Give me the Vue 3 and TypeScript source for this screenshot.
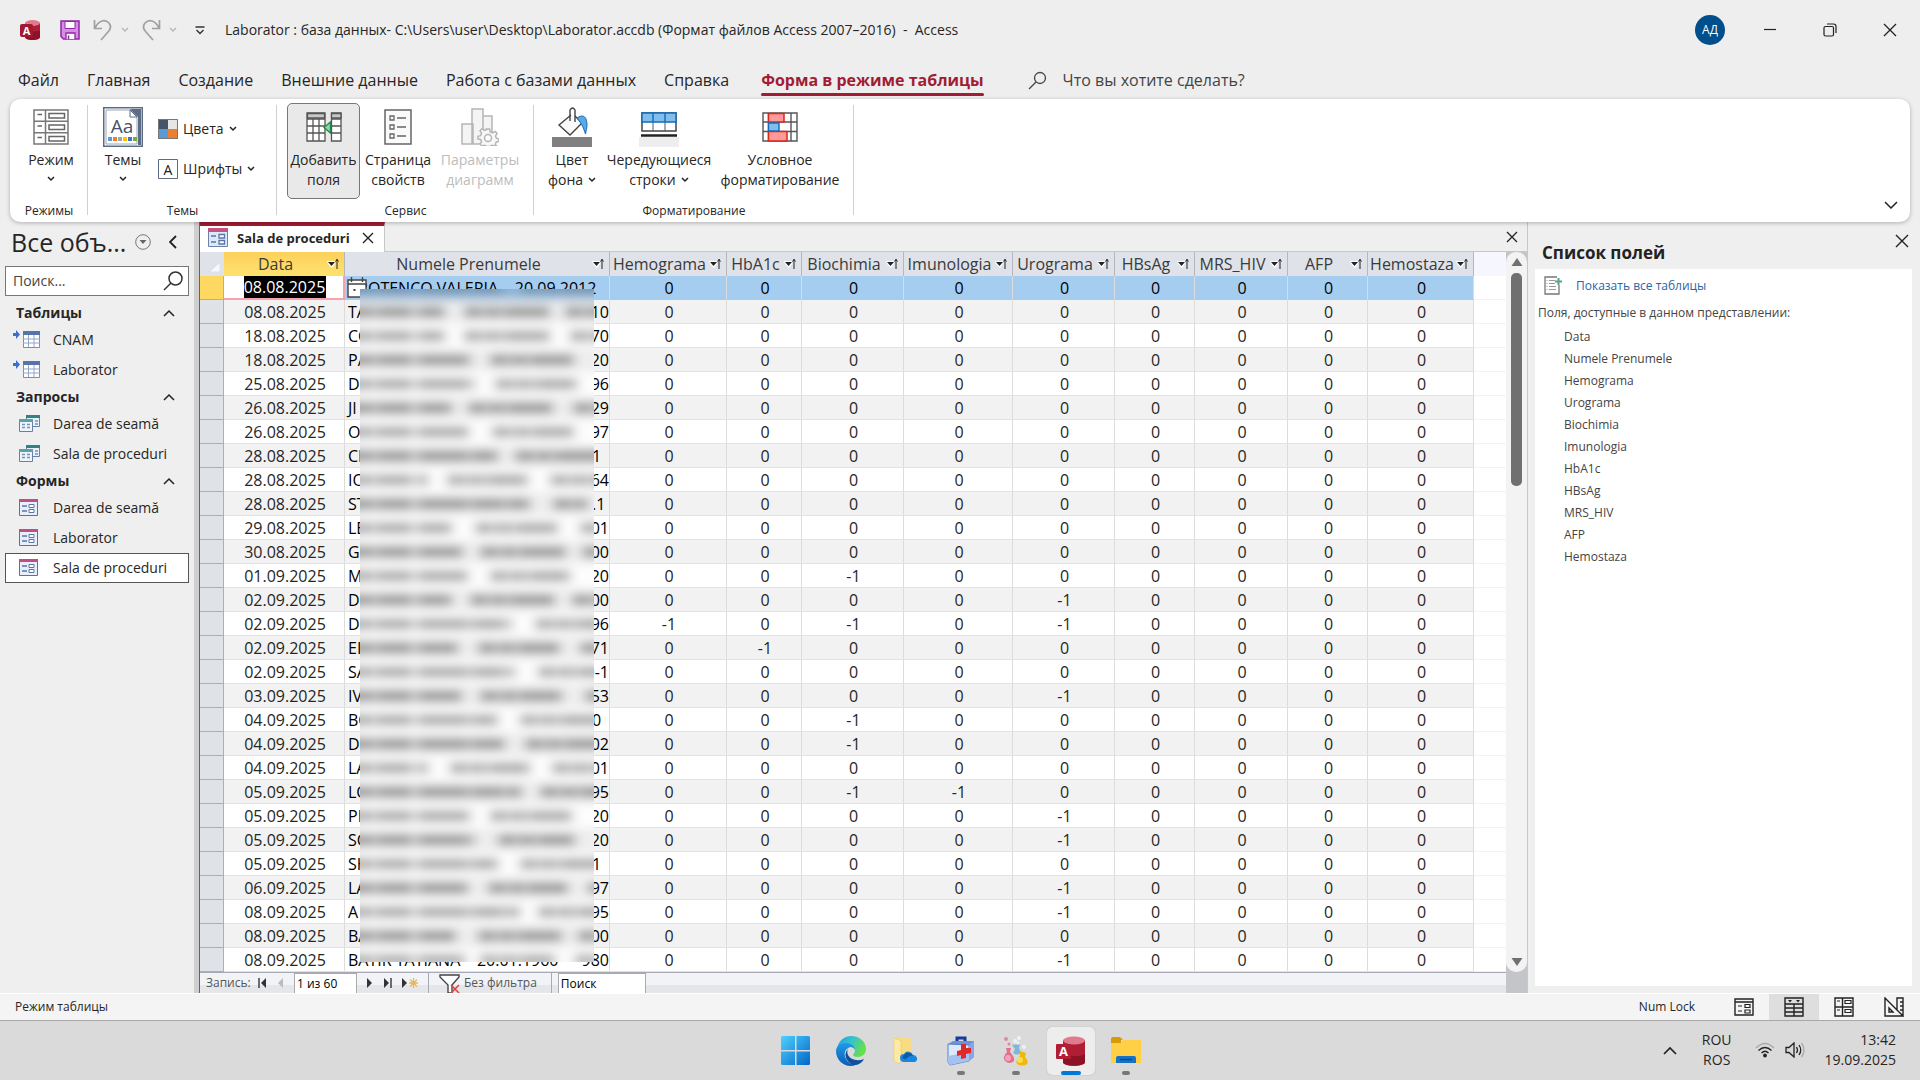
<script setup lang="ts">
import { ref } from 'vue'

interface NavGroup { title: string; kind: 'table' | 'query' | 'form'; items: string[] }
interface Column { name: string; width: number }
interface Row { date: string; name: string; tail: string; marks: number[]; veil: number[][] }

const menuTabs = ['Файл', 'Главная', 'Создание', 'Внешние данные', 'Работа с базами данных', 'Справка']

const navGroups: NavGroup[] = [
  { title: 'Таблицы', kind: 'table', items: ['CNAM', 'Laborator'] },
  { title: 'Запросы', kind: 'query', items: ['Darea de seamă', 'Sala de proceduri'] },
  { title: 'Формы', kind: 'form', items: ['Darea de seamă', 'Laborator', 'Sala de proceduri'] },
]
const isSelected = (g: NavGroup, item: string) => g.kind === 'form' && item === 'Sala de proceduri'

const columns: Column[] = [
  { name: 'Data', width: 121 },
  { name: 'Numele Prenumele', width: 265 },
  { name: 'Hemograma', width: 117 },
  { name: 'HbA1c', width: 75 },
  { name: 'Biochimia', width: 102 },
  { name: 'Imunologia', width: 109 },
  { name: 'Urograma', width: 102 },
  { name: 'HBsAg', width: 80 },
  { name: 'MRS_HIV', width: 93 },
  { name: 'AFP', width: 80 },
  { name: 'Hemostaza', width: 106 },
]
const tests = columns.slice(2)

// marks: indexes of the analyses that were ordered; veil: start/end of each obscured word
const row = (date: string, name: string, tail: string, marks: number[], veil: number[][]): Row =>
  ({ date, name, tail, marks, veil })

const rows: Row[] = [
  row('08.08.2025', 'CROTENCO VALERIA    20.09.2012', '', [], [[-20, 142], [162, 260]]),
  row('08.08.2025', 'TA', '10', [], [[-20, 85], [104, 190], [205, 260]]),
  row('18.08.2025', 'CO', '70', [], [[-20, 85], [104, 190], [210, 260]]),
  row('18.08.2025', 'PA', '20', [], [[-20, 112], [130, 214]]),
  row('25.08.2025', 'D', '96', [], [[-20, 115], [135, 217]]),
  row('26.08.2025', 'JI', '29', [], [[-20, 92], [108, 193], [213, 260]]),
  row('26.08.2025', 'O', '97', [], [[-20, 110], [132, 214]]),
  row('28.08.2025', 'CI', '1', [], [[-20, 138], [155, 260]]),
  row('28.08.2025', 'IO', '64', [], [[-20, 68], [87, 168], [190, 260]]),
  row('28.08.2025', 'ST', '.1', [], [[-20, 170], [193, 228]]),
  row('29.08.2025', 'LE', '01', [], [[-20, 92], [115, 198], [220, 260]]),
  row('30.08.2025', 'G', '00', [], [[-20, 103], [120, 206], [222, 260]]),
  row('01.09.2025', 'M', '20', [2], [[-20, 108], [130, 210]]),
  row('02.09.2025', 'D', '00', [4], [[-20, 92], [110, 195], [212, 260]]),
  row('02.09.2025', 'D', '96', [0, 2, 4], [[-20, 152], [175, 260]]),
  row('02.09.2025', 'EI', '71', [1], [[-20, 98], [118, 200], [220, 260]]),
  row('02.09.2025', 'SA', '0-1', [], [[-20, 155], [178, 260]]),
  row('03.09.2025', 'IV', '53', [4], [[-20, 102], [120, 202], [225, 260]]),
  row('04.09.2025', 'BO', '0', [2], [[-20, 138], [160, 260]]),
  row('04.09.2025', 'D', '02', [2], [[-20, 146], [165, 260]]),
  row('04.09.2025', 'LA', '01', [], [[-20, 68], [90, 170], [192, 260]]),
  row('05.09.2025', 'LO', '95', [2, 3], [[-20, 162], [180, 260]]),
  row('05.09.2025', 'PE', '20', [4], [[-20, 112], [130, 212]]),
  row('05.09.2025', 'SO', '20', [4], [[-20, 115], [138, 215]]),
  row('05.09.2025', 'SH', '1', [], [[-20, 138], [160, 260]]),
  row('06.09.2025', 'LA', '97', [4], [[-20, 108], [128, 208], [228, 260]]),
  row('08.09.2025', 'A', '95', [4], [[-20, 160], [178, 260]]),
  row('08.09.2025', 'BA', '00', [], [[-20, 96], [118, 202], [218, 260]]),
  row('08.09.2025', 'BATÎR TATIANA    20.01.1960', '980', [4], [[-20, 105], [120, 195], [215, 260]]),
]

const fields = ['Data', 'Numele Prenumele', 'Hemograma', 'Urograma', 'Biochimia', 'Imunologia', 'HbA1c', 'HBsAg', 'MRS_HIV', 'AFP', 'Hemostaza']

const tellMe = ref('')
const navSearch = ref('')
const currentDate = ref('08.08.2025')
const position = ref('1 из 60')
const recordSearch = ref('')
</script>

<template>
  <div class="desktop">
    <header class="titlebar">
      <div class="quick">
        <svg width="20" height="20" viewBox="0 0 20 20" aria-hidden="true">
          <path d="M5 3v14c0 4 15 4 15 0V3z" fill="#b01e35" /><path d="M5 12v5c0 4 15 4 15 0v-6z" fill="#8c1225" />
          <ellipse cx="12.500" cy="3" rx="7.500" ry="3" fill="#e07a8d" />
          <rect y="4" width="13" height="13" rx="2" fill="#a31730" />
          <text x="6.500" y="14.500" text-anchor="middle" font-size="11" font-weight="700" fill="#fff">A</text>
        </svg>
        <button class="ghost save" aria-label="Сохранить">
          <svg width="20" height="20" viewBox="0 0 20 20"><path d="M1 1h18v18H3.500L1 16.500z" fill="#d48fe0" stroke="#9325a8" stroke-width="1.500" /><path d="M5 1.500h10v7H5z" fill="#fff" stroke="#9325a8" /><path d="M6 19v-6h9v6" fill="#fff" stroke="#9325a8" stroke-width="1.300" /><path d="M8.500 15.500V19" stroke="#9325a8" stroke-width="1.500" /></svg>
        </button>
        <button class="ghost undo" aria-label="Отменить">
          <svg width="20" height="22" viewBox="0 0 20 22" fill="none" stroke="#a0a0a0" stroke-width="1.700"><path d="M1.500 1v8.500H9M2 9C6 1 12 0 16 4c3 4 1 7-1 9l-7 8" /></svg>
          <svg width="8" height="6" viewBox="0 0 8 6" fill="none" stroke="#b5b5b5" stroke-width="1.300"><path d="M1 1l3 3 3-3" /></svg>
        </button>
        <button class="ghost undo" aria-label="Вернуть">
          <svg width="20" height="22" viewBox="0 0 20 22" fill="none" stroke="#a0a0a0" stroke-width="1.700"><path d="M18.500 1v8.500H11M18 9C14 1 8 0 4 4c-3 4-1 7 1 9l7 8" /></svg>
          <svg width="8" height="6" viewBox="0 0 8 6" fill="none" stroke="#b5b5b5" stroke-width="1.300"><path d="M1 1l3 3 3-3" /></svg>
        </button>
        <button class="ghost more" aria-label="Настройка панели">
          <svg width="10" height="9" viewBox="0 0 10 9" fill="none" stroke="#333" stroke-width="1.400"><path d="M.5 1h9M1.500 4l3.500 3.500L8.500 4" /></svg>
        </button>
      </div>
      <h1>Laborator : база данных- C:\Users\user\Desktop\Laborator.accdb (Формат файлов Access 2007–2016) &nbsp;- &nbsp;Access</h1>
      <button class="avatar">АД</button>
      <div class="winctl">
        <button class="ghost" aria-label="Свернуть"><svg width="14" height="14" viewBox="0 0 14 14"><path d="M1 6.500h12" stroke="#222" stroke-width="1.200" /></svg></button>
        <button class="ghost" aria-label="Восстановить"><svg width="14" height="14" viewBox="0 0 14 14" fill="none" stroke="#222" stroke-width="1.200"><rect x="1" y="3.500" width="9.500" height="9.500" rx="1.500" /><path d="M4 1h6.500Q13 1 13 3.500V10" /></svg></button>
        <button class="ghost" aria-label="Закрыть"><svg width="14" height="14" viewBox="0 0 14 14"><path d="M1 1l12 12M13 1L1 13" stroke="#222" stroke-width="1.300" /></svg></button>
      </div>
    </header>

    <nav class="menu">
      <button v-for="t in menuTabs" :key="t">{{ t }}</button>
      <button class="active">Форма в режиме таблицы</button>
      <label class="tellme">
        <svg width="19" height="19" viewBox="0 0 19 19" fill="none" stroke="#444" stroke-width="1.300"><circle cx="12" cy="7" r="5.500" /><path d="M8 11l-7 7" /></svg>
        <input v-model="tellMe" placeholder="Что вы хотите сделать?" aria-label="Что вы хотите сделать?">
      </label>
    </nav>

    <section class="ribbon">
      <div class="group modes">
        <div class="tools">
          <button class="big">
            <span class="pic"><svg width="36" height="36" viewBox="0 0 36 36" fill="none" stroke="#555" stroke-width="1.500"><path d="M1 1h34v34H1zM1 12.300h34M1 23.700h34M12.500 1v34" stroke="#777" /><path d="M16 4.500h15.500v4.500H16zM16 16h15.500v4.500H16zM16 27.500h15.500v4.500H16zM4.500 5.500H9M4.500 17H9M4.500 28.500H9" stroke="#666" /></svg></span>
            <span>Режим</span><svg class="drop" width="8" height="6" viewBox="0 0 8 6"><path d="M1 1l3 3 3-3" /></svg>
          </button>
        </div>
        <div class="caption">Режимы</div>
      </div>
      <div class="group themes">
        <div class="tools">
          <button class="big">
            <span class="pic"><svg width="40" height="40" viewBox="0 0 40 40"><rect width="40" height="40" fill="#5d6c85" /><rect x="1.500" y="1.500" width="37" height="37" fill="#fff" /><path d="M3 3h25l6 6v28H3z" fill="#fff" stroke="#9aa5b5" /><path d="M27 2h11v36h-3V10z" fill="#5d6c85" /><path d="M27 3v7h7z" fill="#fff" stroke="#5d6c85" /><text x="19" y="26" text-anchor="middle" font-size="19" fill="#44546a">Aa</text><path d="M5 30h4v4H5z" fill="#5b9bd5" /><path d="M10 30h4v4h-4z" fill="#ed7d31" /><path d="M15 30h4v4h-4z" fill="#a5a5a5" /><path d="M20 30h4v4h-4z" fill="#ffc000" /><path d="M25 30h4v4h-4z" fill="#4472c4" /><path d="M30 30h4v4h-4z" fill="#70ad47" /></svg></span>
            <span>Темы</span><svg class="drop" width="8" height="6" viewBox="0 0 8 6"><path d="M1 1l3 3 3-3" /></svg>
          </button>
          <div class="smalls">
            <button class="small"><svg width="20" height="20" viewBox="0 0 20 20"><path d="M0 0h10v10H0z" fill="#44546a" /><path d="M10 0h10v10H10z" fill="#e7e6e6" /><path d="M0 10h10v10H0z" fill="#5b9bd5" /><path d="M10 10h10v10H10z" fill="#ed7d31" /><path d="M.5.500h19v19H.5z" fill="none" stroke="#777" /></svg>Цвета<svg class="drop" width="8" height="6" viewBox="0 0 8 6"><path d="M1 1l3 3 3-3" /></svg></button>
            <button class="small"><svg width="20" height="20" viewBox="0 0 20 20"><path d="M.5.500h19v19H.5z" fill="#fff" stroke="#5d6c85" /><text x="10" y="15.500" text-anchor="middle" font-size="14" fill="#222">A</text></svg>Шрифты<svg class="drop" width="8" height="6" viewBox="0 0 8 6"><path d="M1 1l3 3 3-3" /></svg></button>
          </div>
        </div>
        <div class="caption">Темы</div>
      </div>
      <div class="group service">
        <div class="tools">
          <button class="big pressed">
            <span class="pic"><svg width="36" height="30" viewBox="0 0 36 30" fill="#fff" stroke="#555" stroke-width="1.300"><path d="M1 1h18v28H1zM1 7h18M1 14h18M1 21h18M7 7v22M13 7v22" /><path d="M1.500 1.500h17v4.500h-17z" fill="#c8c8c8" /><path d="M25.500 1H35v28h-9.500zM25.500 7H35M25.500 14H35M25.500 21H35" /><path d="M25.500 1.500H35v4.500h-9.500z" fill="#c8c8c8" /><path d="M24.500 10v11L18 15.500z" fill="#8fd6a3" stroke="#1f8a4c" /></svg></span>
            <span>Добавить</span><span>поля</span>
          </button>
          <button class="big page">
            <span class="pic"><svg width="28" height="36" viewBox="0 0 28 36" fill="none" stroke="#666" stroke-width="1.500"><path d="M1 1h26v34H1z" fill="#fafafa" /><path d="M6 7h4v4H6zM6 16h4v4H6zM6 25h4v4H6zM13 9h9M13 18h9M13 27h9" stroke-width="1.300" /></svg></span>
            <span>Страница</span><span>свойств</span>
          </button>
          <button class="big chart" disabled>
            <span class="pic"><svg width="38" height="38" viewBox="0 0 38 38" fill="#f4f4f4" stroke="#b5b5b5" stroke-width="1.500"><path d="M22 8h9v28h-9zM1 16h11v20H1zM11 1h11v35H11z" /><path d="M25.600 21h3l.6 3 2.300 1 2.600-1.600 2 2-1.600 2.600 1 2.300 2.500.6v2.500l-2.700.6-1 2.300 1.200 1.700-2 0-2.400-.6-2.300 1h-3l-2.400-1-2.400.6-2-2 1.600-2.400-1-2.200-2.700-.6v-2.500l2.700-.6 1-2.300-1.600-2.600 2-2 2.600 1.600 2.300-1z" fill="#f8f8f8" /><circle cx="27" cy="30" r="3.500" fill="#fff" /></svg></span>
            <span>Параметры</span><span>диаграмм</span>
          </button>
        </div>
        <div class="caption">Сервис</div>
      </div>
      <div class="group format">
        <div class="tools">
          <button class="big fill">
            <span class="pic"><svg width="40" height="40" viewBox="0 0 40 40" fill="none"><path d="M0 30h40v10H0z" fill="#808080" /><path d="M19 8L7 18l11 10 12-12-7-7" fill="#fafafa" stroke="#444" stroke-width="1.400" /><path d="M18 14V3q2.500-4 5 0v12" stroke="#444" stroke-width="1.400" /><path d="M25 11c7-5 10 0 10 7-.5 5-1 6-1.500 9-2-6-3-9-8.500-16z" fill="#5aa9e6" stroke="#0f6cbd" /></svg></span>
            <span>Цвет</span><span>фона <svg class="drop" width="8" height="6" viewBox="0 0 8 6"><path d="M1 1l3 3 3-3" /></svg></span>
          </button>
          <button class="big rows">
            <span class="pic"><svg width="40" height="40" viewBox="0 0 40 40" fill="none"><path d="M0 30h40v10H0z" fill="#eee" /><path d="M3 6h34v18H3z" fill="#fff" stroke="#444" stroke-width="1.500" /><path d="M14 15v9M26 15v9" stroke="#555" /><path d="M3 6h34v9H3z" fill="#83bdec" /><path d="M3 6h34v9H3zM14 6v9M26 6v9" stroke="#0f6cbd" stroke-width="1.400" /><path d="M2 28.500h36" stroke="#222" stroke-width="2.500" /></svg></span>
            <span>Чередующиеся</span><span>строки <svg class="drop" width="8" height="6" viewBox="0 0 8 6"><path d="M1 1l3 3 3-3" /></svg></span>
          </button>
          <button class="big cond">
            <span class="pic"><svg width="36" height="30" viewBox="0 0 36 30" fill="#fff" stroke="#555" stroke-width="1.400"><path d="M1 1h34v28H1zM1 10h34M1 19.500h34M29 1v28M6.500 1v28" /><path d="M6.500 1.500H22V10H6.500zM6.500 19.500H25V29H6.500z" fill="#ff9a9a" stroke="#d9281c" stroke-width="1.500" /><path d="M6.500 11H17v8H6.500z" fill="#83bdec" stroke="#0f6cbd" /></svg></span>
            <span>Условное</span><span>форматирование</span>
          </button>
        </div>
        <div class="caption">Форматирование</div>
      </div>
      <button class="ghost collapse" aria-label="Свернуть ленту"><svg width="14" height="8" viewBox="0 0 14 8"><path d="M1 1l6 6 6-6" fill="none" stroke="#222" stroke-width="1.500" /></svg></button>
    </section>

    <main class="work">
      <aside class="objects">
        <div class="objhead">
          <h2>Все объ...</h2>
          <button class="ghost" aria-label="Фильтр объектов"><svg width="16" height="16" viewBox="0 0 16 16"><circle cx="8" cy="8" r="7.300" fill="none" stroke="#777" /><path d="M4.500 6h7L8 10z" fill="#666" /></svg></button>
          <button class="ghost fold" aria-label="Свернуть область"><svg width="8" height="14" viewBox="0 0 8 14"><path d="M7 1L1 7l6 6" fill="none" stroke="#222" stroke-width="1.800" /></svg></button>
        </div>
        <label class="objsearch">
          <input v-model="navSearch" placeholder="Поиск..." aria-label="Поиск объектов">
          <svg width="20" height="20" viewBox="0 0 20 20" fill="none" stroke="#333" stroke-width="1.500"><circle cx="12.500" cy="7.500" r="6.500" /><path d="M8 12l-7 7" /></svg>
        </label>
        <section v-for="g in navGroups" :key="g.title">
          <button class="objgroup">{{ g.title }}<svg width="12" height="8" viewBox="0 0 12 8"><path d="M1 7l5-5 5 5" fill="none" stroke="#222" stroke-width="1.500" /></svg></button>
          <button v-for="item in g.items" :key="item" class="objitem" :class="{ chosen: isSelected(g, item) }">
            <svg v-if="g.kind === 'table'" width="28" height="20" viewBox="0 0 28 20"><path d="M0 3h3V0l4 4.500L3 9V6H0z" fill="#3a6fd0" /><path d="M10.500 1.500h16v16h-16z" fill="#fff" stroke="#7a8eb5" /><path d="M10 1h17v4H10z" fill="#5673ac" /><path d="M10 9h17M10 13h17M15.500 5v12M21 5v12" stroke="#93a6ca" /></svg>
            <svg v-else-if="g.kind === 'query'" width="28" height="20" viewBox="0 0 28 20"><path d="M13.500 1.500h13v11h-13z" fill="#eaf1fa" stroke="#6a80a5" /><path d="M13 1h14v3H13z" fill="#2f8286" /><path d="M6.500 6.500h13v11h-13z" fill="#eef4fc" stroke="#6a80a5" /><path d="M6 5h14v3H6z" fill="#5aa3a5" /><path d="M9 10.500h3M14 10.500h3M9 13.500h3M14 13.500h3M22 7h3M22 10h3" stroke="#7b92b8" stroke-width="1.500" /></svg>
            <svg v-else width="28" height="20" viewBox="0 0 28 20"><path d="M6.500 1.500h18v16h-18z" fill="#e8eefb" stroke="#58739f" /><path d="M6 1h19v3H6z" fill="#bf4f7c" /><path d="M9 8h5M9 13h5" stroke="#5b76a6" stroke-width="1.500" /><path d="M16 6.500h5v3h-5zM16 11.500h5v3h-5z" fill="#fff" stroke="#5b76a6" /></svg>
            {{ item }}
          </button>
        </section>
      </aside>
      <div class="splitter"></div>

      <section class="document">
        <div class="doctabs">
          <div class="doctab">
            <svg width="20" height="20" viewBox="0 0 20 20"><path d="M.5.500h19v18H.5z" fill="#dfe8f8" stroke="#6d82ab" /><path d="M0 0h20v4H0z" fill="#c5527f" /><path d="M3 8h5M3 14h5" stroke="#5b76a6" stroke-width="1.600" /><path d="M11 6.500h5.500v3.500H11zM11 12.500h5.500v3.500H11z" fill="#fff" stroke="#5b76a6" stroke-width="1.300" /></svg>
            <strong>Sala de proceduri</strong>
            <button class="ghost" aria-label="Закрыть вкладку"><svg width="12" height="12" viewBox="0 0 12 12"><path d="M1 1l10 10M11 1L1 11" stroke="#222" stroke-width="1.400" /></svg></button>
          </div>
          <button class="ghost closeall" aria-label="Закрыть объект"><svg width="12" height="12" viewBox="0 0 12 12"><path d="M1 1l10 10M11 1L1 11" stroke="#222" stroke-width="1.300" /></svg></button>
        </div>
        <div class="sheet">
          <div class="left">
            <div class="gridwrap">
              <table>
                <colgroup><col style="width: 24px"><col v-for="c in columns" :key="c.name" :style="{ width: c.width + 'px' }"><col></colgroup>
                <thead>
                  <tr>
                    <th class="corner"><svg width="11" height="10" viewBox="0 0 11 10"><path d="M11 0v10H0z" fill="#f6f8fb" stroke="#c2c8d0" stroke-width=".5" /></svg></th>
                    <th v-for="c in columns" :key="c.name" :class="{ sorted: c.name === 'Data' }">
                      <button><span>{{ c.name }}</span><svg width="12" height="12" viewBox="0 0 12 12"><path d="M0 3h8v3L5 10 1 6z" fill="#fff" /><path d="M1 4h7L4.500 8z" fill="#222" /><path d="M10 1v10M8.500 3.500L10 1.500l1.500 2" stroke="#222" fill="none" /></svg></button>
                    </th>
                    <th class="rest"></th>
                  </tr>
                </thead>
                <tbody>
                  <tr v-for="(r, i) in rows" :key="i" :class="{ current: i === 0 }">
                    <th scope="row" class="selector"></th>
                    <td v-if="i === 0" class="editing"><input v-model="currentDate" aria-label="Data"></td>
                    <td v-else>{{ r.date }}</td>
                    <td class="person"><div><span>{{ r.name }}</span><span v-if="r.tail" class="tail">{{ r.tail }}</span></div></td>
                    <td v-for="(t, k) in tests" :key="t.name">{{ r.marks.includes(k) ? '-1' : '0' }}</td>
                    <td class="rest"></td>
                  </tr>
                </tbody>
              </table>
              <button class="calendar" aria-label="Выбрать дату"><svg width="20" height="21" viewBox="0 0 20 21" fill="#fff" stroke="#444" stroke-width="1.400"><path d="M1 3h18v17H1z" /><path d="M1 7h18M4.500 0v5M15.500 0v5" /><path d="M6.500 12h2v2h-2z" fill="#444" stroke="none" /></svg></button>
              <svg class="veil" width="234" height="673" viewBox="0 37 234 673" aria-hidden="true">
                <defs><filter id="soft" x="-10%" y="-5%" width="120%" height="110%"><feGaussianBlur stdDeviation="6 5" /></filter></defs>
                <rect y="37" width="234" height="673" fill="#f6f6f6" />
                <g filter="url(#soft)">
                  <template v-for="(r, i) in rows" :key="i">
                    <rect x="-30" :y="24 + i * 24" width="294" height="24" :fill="i === 0 ? '#8fb6d8' : i % 2 ? '#eeeeee' : '#fdfdfd'" />
                    <line v-for="(s, k) in r.veil" :key="k" :x1="s[0]" :x2="s[1]" :y1="36 + i * 24" :y2="36 + i * 24" :stroke="i === 0 ? '#7796b4' : i % 2 ? '#9f9f9f' : '#b0b0b0'" stroke-width="12" :stroke-dasharray="k === 0 ? '34 2 37 4 52 2' : '19 2 16 2 60 3'" />
                  </template>
                </g>
              </svg>
            </div>
            <div class="records">
              <span class="rectitle">Запись:</span>
              <button class="ghost" aria-label="Первая запись"><svg width="9" height="10" viewBox="0 0 9 10"><path d="M1 0v10" stroke="#333" stroke-width="1.400" /><path d="M8 0v10L3 5z" fill="#333" /></svg></button>
              <button class="ghost" aria-label="Предыдущая запись" disabled><svg width="9" height="10" viewBox="0 0 9 10"><path d="M7 0v10L2 5z" fill="#bbb" /></svg></button>
              <input v-model="position" class="pos" aria-label="Текущая запись">
              <button class="ghost" aria-label="Следующая запись"><svg width="9" height="10" viewBox="0 0 9 10"><path d="M2 0v10l5-5z" fill="#333" /></svg></button>
              <button class="ghost" aria-label="Последняя запись"><svg width="9" height="10" viewBox="0 0 9 10"><path d="M8 0v10" stroke="#333" stroke-width="1.400" /><path d="M1 0v10l5-5z" fill="#333" /></svg></button>
              <button class="ghost" aria-label="Новая запись"><svg width="18" height="10" viewBox="0 0 18 10"><path d="M1 0v10l5-5z" fill="#333" /><path d="M12.500 0v10M8 5h9M9 1.500l7 7M16 1.500l-7 7" stroke="#e5b860" stroke-width="1.300" /></svg></button>
              <i></i>
              <button class="ghost filter"><svg width="22" height="19" viewBox="0 0 22 19" fill="#fff"><path d="M1 1h19v2l-7 8v8H9v-8L1 3z" stroke="#444" stroke-width="1.400" /><path d="M12 11l8 8M20 11l-8 8" stroke="#e04545" stroke-width="1.600" /></svg>Без фильтра</button>
              <i></i>
              <input v-model="recordSearch" class="find" placeholder="Поиск" aria-label="Поиск записей">
            </div>
          </div>
          <div class="scroll">
            <div class="track">
              <svg width="12" height="10" viewBox="0 0 12 10"><path d="M6 1l5.500 8H.5z" fill="#707070" /></svg>
              <div class="thumb"></div>
              <svg class="down" width="12" height="10" viewBox="0 0 12 10"><path d="M6 9l5.500-8H.5z" fill="#707070" /></svg>
            </div>
          </div>
        </div>
      </section>

      <aside class="fields">
        <div class="fieldhead">
          <h2>Список полей</h2>
          <button class="ghost" aria-label="Закрыть список"><svg width="14" height="14" viewBox="0 0 14 14"><path d="M1 1l12 12M13 1L1 13" stroke="#222" stroke-width="1.400" /></svg></button>
        </div>
        <div class="fieldbody">
          <a href="#"><svg width="18" height="19" viewBox="0 0 18 19" fill="none" stroke="#777"><path d="M13 1H1v17h14V9" stroke-width="1.300" /><path d="M5 4.500h6M5 7.500h6M5 10.500h7M5 13.500h7M2.500 4.500h1M2.500 7.500h1M2.500 10.500h1M2.500 13.500h1" stroke="#999" /><path d="M14.500 2v7M11 5.500h7" stroke="#5fa08c" stroke-width="2" /></svg>Показать все таблицы</a>
          <p>Поля, доступные в данном представлении:</p>
          <ul><li v-for="f in fields" :key="f">{{ f }}</li></ul>
        </div>
      </aside>
    </main>

    <footer class="status">
      <span>Режим таблицы</span>
      <span class="numlock">Num Lock</span>
      <button aria-label="Режим формы"><svg width="20" height="20" viewBox="0 0 20 20" fill="none" stroke="#222" stroke-width="1.400"><path d="M1 2h18v16H1zM1 5h18" /><path d="M4 9h4M4 14h4M11 7.500h5v3h-5zM11 13h5v3h-5z" stroke-width="1.200" /></svg></button>
      <button class="on" aria-label="Режим таблицы"><svg width="20" height="20" viewBox="0 0 20 20" fill="none" stroke="#222" stroke-width="1.400"><path d="M1 1h18v18H1zM1 7h18M1 11h18M1 15h18M10 7v12" /><path d="M4 3h4L6 5.500zM12 3h4l-2 2.500z" fill="#222" stroke="none" /></svg></button>
      <button aria-label="Режим макета"><svg width="20" height="20" viewBox="0 0 20 20" fill="none" stroke="#222" stroke-width="1.400"><path d="M1 1h18v18H1zM1 10h18M8.500 1v18" /><path d="M3 4h3M3 13h3M11 3.500h6v3h-6zM11 12.500h6v3h-6z" stroke-width="1.200" /></svg></button>
      <button aria-label="Конструктор"><svg width="20" height="20" viewBox="0 0 20 20" fill="none" stroke="#222" stroke-width="1.400"><path d="M1 1v18h18zM5 11v4h4zM13 13V1h6v18M19 5h-3M19 9h-3M19 13h-3" /></svg></button>
    </footer>

    <footer class="taskbar">
      <div class="apps">
        <button aria-label="Пуск">
          <svg width="30" height="30" viewBox="0 0 30 30"><defs><linearGradient id="win" x2="1" y2="1"><stop stop-color="#4fd0ff" /><stop offset="1" stop-color="#0067c8" /></linearGradient></defs><path d="M0 1.500Q0 0 1.500 0H14v14H0zM15.500 0h12q1.500 0 1.500 1.500V14H15.500zM0 15.500h14V29H1.500Q0 29 0 27.500zM15.500 15.500H29v12q0 1.500-1.500 1.500h-12z" fill="url(#win)" /></svg>
        </button>
        <button aria-label="Edge">
          <svg width="30" height="30" viewBox="0 0 30 30"><defs><linearGradient id="e1" x2="1" y2=".4"><stop stop-color="#1b9de2" /><stop offset=".5" stop-color="#35c1cf" /><stop offset="1" stop-color="#66e04b" /></linearGradient><linearGradient id="e2" x2="0" y2="1"><stop stop-color="#1e9be8" /><stop offset="1" stop-color="#0c5cb5" /></linearGradient></defs><path d="M1 12C3 4 9 0 15 0c9 0 15 6 15 13 0 5-4 8-8 8-3 0-5-1-5-2s2-2 2-5c0-4-4-6-8-6C7 8 3 10 1 12z" fill="url(#e1)" /><path d="M0 15C0 10 5 7 10 7c5 0 9 3 9 7-1-2-3-3-4-3-6 1-8 7-5 12 2 4 6 6 9 6.500C8 32 0 24 0 15z" fill="url(#e2)" /><path d="M12 13c-5 5-2 12 4 16 5 1 10-2 12-6-7 3-14 0-16-4-1-2-1-4 0-6z" fill="#114f9c" /></svg>
        </button>
        <button aria-label="OneDrive">
          <svg width="26" height="28" viewBox="0 0 26 28"><path d="M2 1h14q2 0 2 2v20L7 25z" fill="#f7dc83" /><path d="M1 1l7 3v20l-2 3-5-3z" fill="#ffe9a8" stroke="#e8c35c" stroke-width=".5" /><path d="M11 25a4 4 0 010-8 5 5 0 019 1 3.700 3.700 0 012 7z" fill="#1b87dc" /><path d="M11 18a5 5 0 019 1c-4-1-5 2-7 3-3 1-5-2-2-4z" fill="#0b5cab" /></svg>
        </button>
        <button class="running" aria-label="Медицина">
          <svg width="28" height="30" viewBox="0 0 28 30"><path d="M10 5V2h8v3" fill="none" stroke="#17399b" stroke-width="3" /><path d="M1 8l5-3h21v16l-5 4-19 4-2-3z" fill="#6d92dc" /><path d="M1 8l21 1v16L3 29l-2-3z" fill="#dce9fb" stroke="#5b7fce" /><path d="M22 9l5-4v16l-5 4z" fill="#86a6e4" /><path d="M1 20l21-4v9L3 29l-2-3z" fill="#a5c1ef" /><path d="M14 8h5v4h5v5l-5 1v4l-5 1v-4l-4 1v-5l4-1z" fill="#e02a2a" /></svg>
        </button>
        <button class="running" aria-label="Лаборатория">
          <svg width="28" height="30" viewBox="0 0 28 30"><path d="M10 9l8-1-1 4 2 5q-4 3-8 0l2-4z" fill="#7db8dc" /><path d="M4 12h5l-1 4q5 5 4 9-4 4-9 0-3-4 2-9z" fill="#e4708d" /><circle cx="6" cy="22" r="3" fill="#f2a4b6" /><path d="M18 15l6 2-1 4q4 4 2 7-5 3-10 0-2-4 3-8z" fill="#efb90c" /><circle cx="18" cy="24" r="3" fill="#ffdc4f" /><g fill="#f2f2f2"><circle cx="17" cy="2" r="2" /><circle cx="13" cy="5" r="2" /><circle cx="22" cy="11" r="2" /><circle cx="16" cy="7" r="1.500" /></g><circle cx="4" cy="3" r="2" fill="#dd8ba0" /><circle cx="7" cy="8" r="1.500" fill="#dd8ba0" /></svg>
        </button>
        <button class="front" aria-label="Access">
          <svg width="30" height="30" viewBox="0 0 30 30"><path d="M7 4v22c0 5 22 5 22 0V4z" fill="#b01e35" /><path d="M7 19v7c0 5 22 5 22 0v-8q-5 3-12 2z" fill="#8c1225" /><ellipse cx="18" cy="4.500" rx="11" ry="4" fill="#e07a8d" /><rect y="8" width="15" height="15" rx="1" fill="#b31c35" /><text x="7.500" y="20" text-anchor="middle" font-size="13" font-weight="700" fill="#fff">A</text></svg>
        </button>
        <button class="running" aria-label="Проводник">
          <svg width="30" height="28" viewBox="0 0 30 28"><path d="M0 2q0-2 2-2h7l3 3h-2v3H0z" fill="#d99a06" /><path d="M0 6h10l2-3h17q1 0 1 1v22H0z" fill="#ffcf45" /><path d="M5 26v-5q0-2 2-2h16q2 0 2 2v5z" fill="#1473c8" /><path d="M9 22.500h12" stroke="#0a4a8f" stroke-width="1.500" /></svg>
        </button>
      </div>
      <div class="tray">
        <svg width="14" height="9" viewBox="0 0 14 9"><path d="M1 8l6-6 6 6" fill="none" stroke="#222" stroke-width="1.700" /></svg>
        <span class="lang">ROU<br>ROS</span>
        <svg width="20" height="16" viewBox="0 0 20 16" fill="none" stroke="#222" stroke-width="1.400"><path d="M1 6q9-9 18 0" stroke="#aaa" /><path d="M3.500 8.500q6.500-6 13 0M6.500 11q3.500-3.500 7 0" /><circle cx="10" cy="13.500" r="1.200" fill="#222" /></svg>
        <svg width="20" height="16" viewBox="0 0 20 16" fill="none" stroke="#222" stroke-width="1.300"><path d="M1 5.500h3L9 1v14l-5-4.500H1z" /><path d="M11.500 5q2 3 0 6M14 3q3.500 5 0 10" /><path d="M16.500 1q5 7 0 14" stroke="#aaa" /></svg>
        <span class="clock">13:42<br>19.09.2025</span>
      </div>
    </footer>
  </div>
</template>

<style>
body { margin: 0; background: #eee; }
</style>

<style scoped>
.desktop { height: 100vh; display: flex; flex-direction: column; background: #eee; color: #262626; font: 14px/20px 'Open Sans', 'Noto Sans', sans-serif; overflow: hidden; }
.desktop * { box-sizing: border-box; }
button, input { font: inherit; color: inherit; margin: 0; padding: 0; border: 0; background: none; border-radius: 0; outline: 0; }
h1, h2, p, ul { margin: 0; padding: 0; }
svg { display: block; flex: none; }
.ghost { display: flex; align-items: center; justify-content: center; }
.drop path { fill: none; stroke: #222; stroke-width: 1.500; }

.titlebar { height: 60px; display: flex; align-items: center; padding-left: 20px; }
.quick { display: flex; align-items: center; width: 205px; }
.save { margin-left: 20px; }
.undo { gap: 8px; margin-left: 14px; width: 34px; }
.more { margin-left: 19px; }
h1 { flex: 1; font-size: 14px; font-weight: 400; white-space: pre; line-height: 22px; }
.avatar { width: 30px; height: 30px; border-radius: 50%; background: #004e8c; color: #fff; font-size: 12px; margin-right: 15px; }
.winctl { display: flex; }
.winctl button { width: 60px; height: 40px; }

.menu { height: 39px; display: flex; padding-left: 18px; gap: 28px; font-size: 16px; }
.menu button { height: 40px; white-space: nowrap; }
.menu .active { color: #a21c33; font-weight: 700; position: relative; margin-left: 4px; }
.menu .active::after { content: ''; position: absolute; left: 0; right: 0; bottom: 4px; height: 3px; border-radius: 2px; background: #a21c33; }
.tellme { display: flex; align-items: center; gap: 16px; margin-left: 16px; height: 40px; }
.tellme input { width: 220px; }
.tellme input::placeholder { color: #444; opacity: 1; }

.ribbon { height: 123px; margin: 0 10px; display: flex; background: #fff; border-radius: 10px; box-shadow: 0 1px 4px #0004; position: relative; z-index: 3; flex: none; }
.group { position: relative; display: flex; flex-direction: column; justify-content: space-between; padding: 4px 0 1px; }
.group::after { content: ''; position: absolute; right: 0; top: 6px; bottom: 7px; width: 1px; background: #d0d0d0; }
.tools { display: flex; }
.caption { text-align: center; font-size: 12px; }
.modes { width: 78px; }
.themes { width: 189px; }
.service { width: 257px; }
.format { width: 320px; }
.big { height: 96px; padding-top: 3px; border: 1px solid transparent; display: flex; flex-direction: column; align-items: center; white-space: nowrap; }
.big span { display: flex; align-items: center; gap: 5px; }
.big .pic { height: 40px; margin-bottom: 3px; }
.big > .drop { margin-top: 6px; }
.modes .big { width: 74px; margin-left: 4px; }
.themes .big { width: 70px; }
.smalls { display: flex; flex-direction: column; gap: 16px; padding-top: 14px; }
.small { height: 24px; display: flex; align-items: center; gap: 5px; }
.pressed { margin-left: 10px; width: 73px; border-color: #777; border-radius: 5px; background: #e9e9e9; }
.page { width: 76px; }
.chart { width: 88px; color: #bdbdbd; }
.fill { width: 76px; }
.rows { width: 98px; }
.cond { width: 144px; }
.collapse { position: absolute; right: 12px; bottom: 8px; height: 18px; }

.work { flex: 1; min-height: 0; display: flex; background: #efefef; border-bottom: 1px solid #fff; }
.objects { width: 194px; padding: 0 5px; flex: none; }
.objhead { height: 44px; display: flex; align-items: center; padding: 0 12px 5px 6px; }
h2 { font-size: 25px; font-weight: 400; line-height: 36px; white-space: nowrap; }
.objhead h2 { flex: 1; }
.fold { margin-left: 18px; }
.objsearch { height: 30px; border: 1px solid #777; background: #fff; display: flex; align-items: center; padding: 0 5px 0 7px; margin-bottom: 5px; }
.objsearch input { flex: 1; min-width: 0; }
.objsearch input::placeholder { color: #444; opacity: 1; }
.objgroup { width: 100%; height: 24px; display: flex; align-items: center; justify-content: space-between; padding: 0 14px 0 11px; font-weight: 700; }
.objitem { width: 100%; height: 30px; display: flex; align-items: center; gap: 12px; padding-left: 7px; border: 1px solid transparent; white-space: nowrap; }
.chosen { background: #fff; border-color: #555; }
.splitter { width: 6px; background: #cfcfcf; border-right: 1px solid #666; }

.document { flex: 1; min-width: 0; display: flex; flex-direction: column; }
.doctabs { height: 30px; flex: none; display: flex; justify-content: space-between; border-bottom: 1px solid #c8c8c8; }
.doctab { width: 185px; border-top: 4px solid #a21c33; border-right: 1px solid #c8c8c8; background: #fff; display: flex; align-items: center; gap: 9px; padding: 0 10px 2px 8px; font-size: 13px; margin-bottom: -1px; }
.doctab button { margin-left: auto; }
.closeall { padding-right: 9px; }
.sheet { flex: 1; min-height: 0; display: flex; }
.left { flex: 1; min-width: 0; display: flex; flex-direction: column; background: #fff; }
.gridwrap { flex: 1; min-height: 0; overflow: hidden; position: relative; }
table { width: 100%; border-collapse: separate; border-spacing: 0; table-layout: fixed; font-size: 16px; line-height: 22px; }
th, td { padding: 0; height: 24px; font-weight: 400; text-align: center; border-right: 1px solid #dcdcdc; border-bottom: 1px solid #e2e2e2; overflow: hidden; white-space: nowrap; }
td { line-height: 22px; padding: 1px 0 0 2px; }
thead th { background: #dfe2e8; border-right-color: #b3b8c0; border-bottom: 0; color: #3a3a3a; }
thead th.corner { border-right: 0; }
.corner svg { margin: 6px 0 0 9px; }
thead th.sorted { background: linear-gradient(#fdd05c, #fee26e); }
thead button { width: 100%; height: 24px; display: flex; align-items: center; padding-right: 5px; }
thead span { flex: 1; min-width: 0; display: flex; justify-content: center; }
tbody tr:nth-child(even) td { background: #f2f2f2; }
tbody tr.current td { background: #a5cdf0; border-bottom-color: #a5cdf0; color: #000; }
tbody .selector { background: #dfe3e8; border-right-color: #a9b0ba; border-bottom-color: #a9b0ba; }
tbody .current .selector { background: #ffd862; }
tbody tr.current td.editing { background: #fff; border-right: 2px solid #f5a3ad; border-bottom: 2px solid #f5a3ad; padding-top: 0; }
.editing input { display: block; width: 82px; height: 22px; margin: 0 auto; background: #000; color: #fff; text-align: center; }
td.person { color: #000; text-align: left; white-space: pre; padding-left: 3px; }
.person div { display: flex; justify-content: space-between; }
.tail { min-width: 17px; }
thead th.rest { background: #f6f6ff; border: 0; }
tbody tr td.rest, tbody tr.current td.rest { background: #fff; border-right: 0; border-bottom-color: #f3f3f3; }
.calendar { position: absolute; left: 147px; top: 25px; }
.veil { position: absolute; left: 160px; top: 37px; overflow: hidden; }

.records { height: 21px; flex: none; display: flex; align-items: center; padding-left: 6px; border-top: 1px solid #a9a9b5; background: linear-gradient(#f2f3f7 60%, #e4e6ea 60%); font-size: 12px; overflow: hidden; color: #555; }
.rectitle { width: 52px; }
.records .ghost { margin-right: 9px; }
.records input { height: 20px; border: 1px solid #aaa; border-bottom: 0; background: #fff; color: #000; padding-left: 2px; }
.records .pos { width: 63px; margin-right: 8px; }
.records i { width: 1px; height: 20px; background: #a9a9b5; margin-right: 6px; }
.records .filter { gap: 3px; margin: 0 14px 0 4px; }
.records .find { width: 88px; }
.records .find::placeholder { color: #000; opacity: 1; }
.scroll { width: 21px; background: #c4c5c9; padding-bottom: 21px; }
.track { height: 100%; background: #f3f3f3; border-radius: 10px; display: flex; flex-direction: column; align-items: center; padding: 5px 0; }
.thumb { width: 11px; height: 213px; margin-top: 6px; border-radius: 5px; background: #707070; }
.down { margin-top: auto; }

.fields { width: 393px; flex: none; border-left: 1px solid #c8c8c8; padding: 0 8px 7px 7px; display: flex; flex-direction: column; font-size: 12px; color: #444; }
.fieldhead { height: 47px; display: flex; justify-content: space-between; padding: 0 3px 0 7px; color: #222; }
.fieldhead h2 { font-size: 17px; font-weight: 700; line-height: 62px; }
.fieldhead button { height: 38px; }
.fieldbody { flex: 1; background: #fff; }
.fieldbody a { display: flex; align-items: center; gap: 14px; padding-left: 9px; height: 33px; color: #2a64a8; text-decoration: none; }
.fieldbody p { line-height: 22px; padding-left: 3px; }
.fieldbody ul { list-style: none; padding: 2px 0 0 29px; line-height: 22px; }

.status { height: 27px; flex: none; background: #f4f4f4; border-bottom: 1px solid #a8a8a8; display: flex; align-items: center; padding: 0 1px 0 15px; font-size: 12px; }
.numlock { margin-left: auto; margin-right: 24px; }
.status button { width: 50px; height: 26px; display: flex; align-items: center; justify-content: center; }
.status .on { background: #dedede; }

.taskbar { height: 59px; flex: none; background: #dadada; position: relative; display: flex; justify-content: center; align-items: center; padding-left: 2px; }
.apps { display: flex; gap: 7px; }
.apps button { width: 48px; height: 48px; border-radius: 5px; display: flex; align-items: center; justify-content: center; position: relative; }
.apps .front { background: #ededed; box-shadow: 0 0 1px #999; }
.running::after, .front::after { content: ''; position: absolute; bottom: 0; width: 8px; height: 4px; border-radius: 2px; background: #777; }
.front::after { width: 20px; background: #0078d4; }
.tray { position: absolute; right: 24px; top: 9px; bottom: 10px; display: flex; align-items: center; gap: 10px; }
.lang { margin: 0 13px 0 15px; text-align: center; }
.clock { text-align: right; margin-left: 10px; }
</style>
